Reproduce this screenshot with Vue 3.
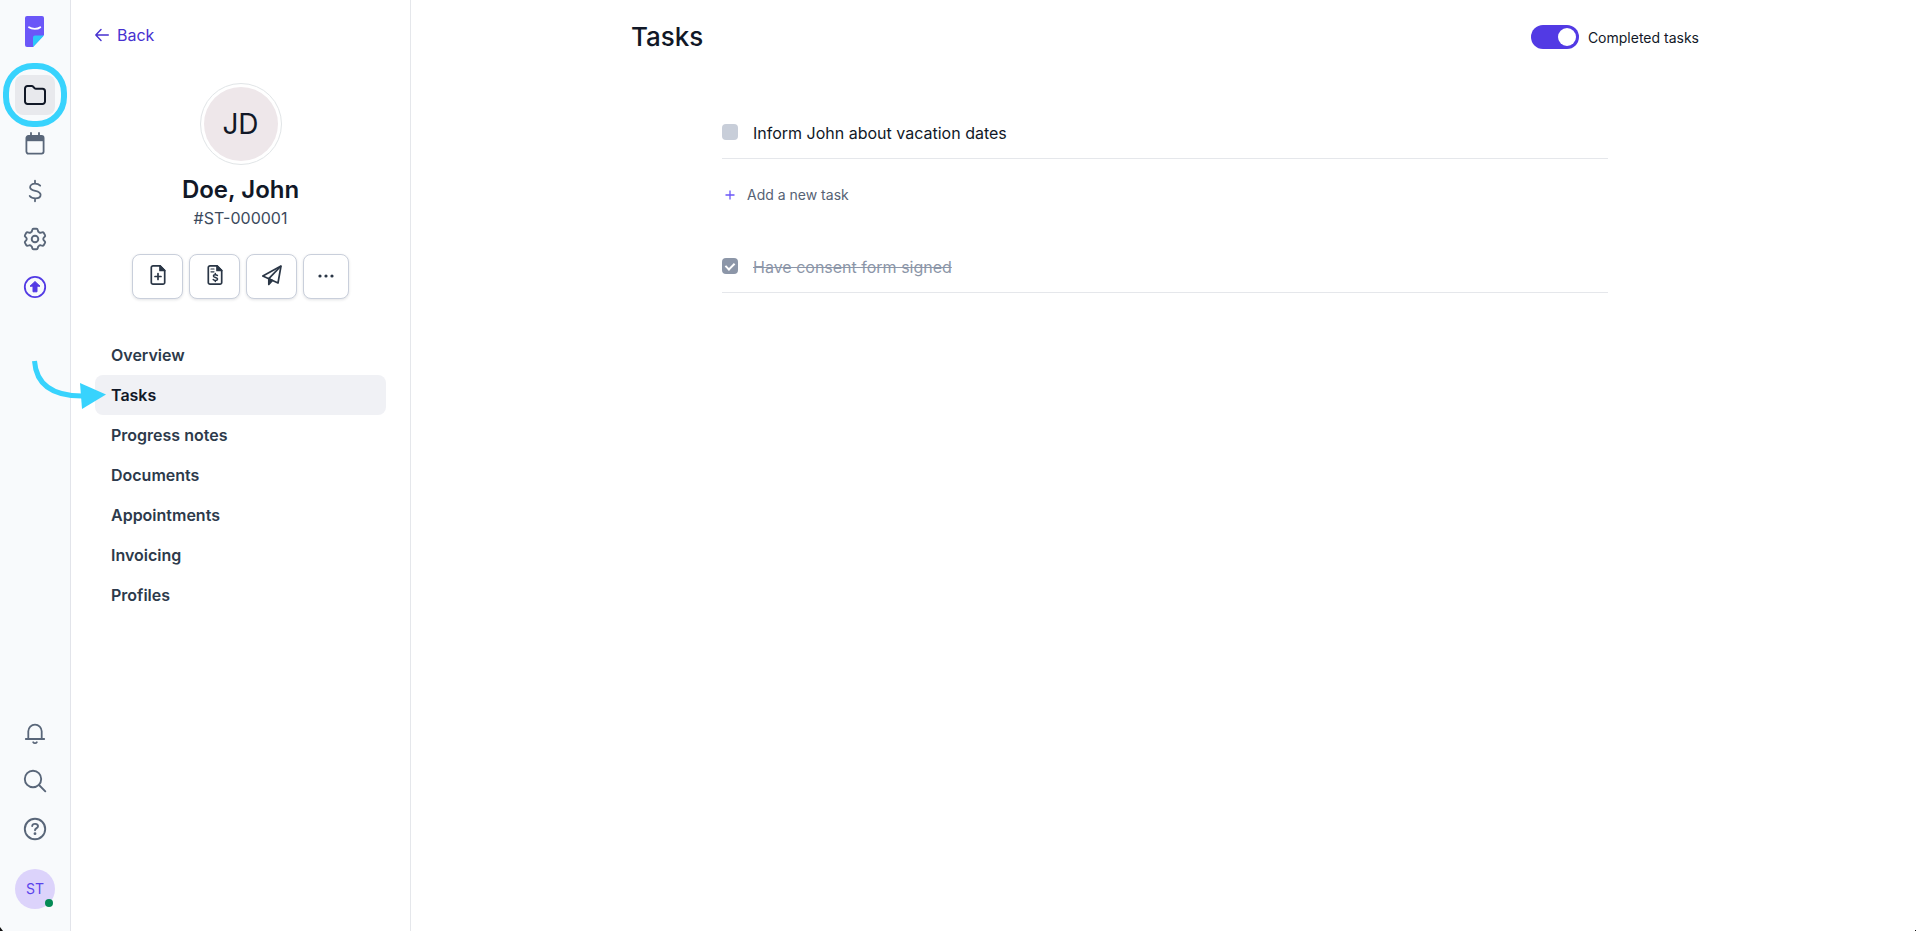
<script setup>
import { ref } from 'vue'

const showCompleted = ref(true)
const nav = ['Overview', 'Tasks', 'Progress notes', 'Documents', 'Appointments', 'Invoicing', 'Profiles']
const active = ref('Tasks')
const todo = ref(false)
const signed = ref(true)
</script>

<template>
  <div class="app">
    <nav class="rail" aria-label="Main">
      <a href="#" class="logo" aria-label="Home">
        <svg width="19" height="31" viewBox="0 0 19 31">
          <path d="M2 0H17a2 2 0 0 1 2 2V19L8 31H2a2 2 0 0 1-2-2V2a2 2 0 0 1 2-2z" fill="#6b57f8" />
          <path d="M19 19.5H10a2 2 0 0 0-2 2V31z" fill="#2bc8fa" />
          <path d="M4 11.2c3 2.200 8.500 2.200 11.300 0" fill="none" stroke="#fff" stroke-width="1.800" stroke-linecap="round" />
        </svg>
      </a>
      <a href="#" class="item current" aria-label="Clients">
        <svg width="24" height="24" viewBox="0 0 24 24" fill="none" stroke="currentColor" stroke-width="2" stroke-linejoin="round">
          <path d="M2 5.500A2.500 2.500 0 0 1 4.500 3H8.700a2 2 0 0 1 1.500.7l1.300 1.400a2 2 0 0 0 1.500.7h6.500A2.500 2.500 0 0 1 22 8.300v10.200a2.500 2.500 0 0 1-2.500 2.500h-15A2.500 2.500 0 0 1 2 18.500z" />
        </svg>
        <span class="ring"></span>
      </a>
      <a href="#" class="item" aria-label="Calendar">
        <svg width="24" height="24" viewBox="0 -1 24 24" fill="none" stroke="currentColor" stroke-width="1.800">
          <rect x="3.400" y="4" width="17.200" height="17.600" rx="2" />
          <path d="M3 5h18v4.200H3z" fill="currentColor" stroke="none" />
          <path d="M8 1v4M16 1v4" stroke-linecap="round" />
        </svg>
      </a>
      <a href="#" class="item" aria-label="Billing">
        <svg width="24" height="24" viewBox="0 0 24 24" fill="none" stroke="currentColor" stroke-width="1.800" stroke-linecap="round">
          <path d="M12 1.700v3M12 19.300v3M17.200 6.700C15.800 5.200 14 4.700 12 4.700c-2.800 0-4.900 1.300-4.900 3.500 0 4.900 10.500 2.500 10.500 7.600 0 2.300-2.300 3.600-5.200 3.600-2.300 0-4.400-.7-5.700-2.400" />
        </svg>
      </a>
      <a href="#" class="item" aria-label="Settings">
        <svg width="24" height="24" viewBox="0 0 24 24" fill="none" stroke="currentColor" stroke-width="1.900" stroke-linejoin="round">
          <path d="M10.500 1.700h3q1 0 1.200 1l.4 1.500q.2.700.9 1l.6.400q.7.400 1.400.1l1.200-.4q1-.3 1.500.5l1.300 2.300q.5.900-.2 1.600l-1 1q-.5.500-.5 1.300t.5 1.300l1 1q.7.700.2 1.600l-1.300 2.300q-.5.800-1.500.5l-1.200-.4q-.7-.3-1.400.1l-.6.400q-.7.300-.9 1l-.4 1.500q-.2 1-1.200 1h-3q-1 0-1.200-1l-.4-1.500q-.2-.7-.9-1l-.6-.4q-.7-.4-1.400-.1l-1.200.4q-1 .3-1.500-.5L2 15.900q-.5-.9.2-1.600l1-1q.5-.5.5-1.300t-.5-1.300l-1-1Q1.500 9 2 8.100l1.300-2.300q.5-.8 1.500-.5L6 5.700q.7.300 1.400-.1L8 5.200q.7-.3.9-1l.4-1.500q.2-1 1.200-1z" />
          <circle cx="12" cy="12" r="3.300" />
        </svg>
      </a>
      <a href="#" class="item upgrade" aria-label="Upgrade">
        <svg width="24" height="24" viewBox="0 0 24 24">
          <circle cx="12" cy="12" r="10.200" fill="none" stroke="currentColor" stroke-width="1.800" />
          <path d="M12 6.500l5 4.700H14v5.600h-4v-5.600H7z" fill="currentColor" stroke="currentColor" stroke-width="1" stroke-linejoin="round" />
        </svg>
      </a>

      <span class="spacer"></span>

      <a href="#" class="item" aria-label="Notifications">
        <svg width="24" height="24" viewBox="0 -1 24 24" fill="none" stroke="currentColor" stroke-width="1.800" stroke-linecap="round" stroke-linejoin="round">
          <path d="M2.800 17h18.400M5.300 17V9.300a6.700 6.700 0 0 1 13.400 0V17" />
          <path d="M10.200 20.300c.8 1.200 2.800 1.200 3.600 0" />
        </svg>
      </a>
      <a href="#" class="item" aria-label="Search">
        <svg width="24" height="24" viewBox="0 0 24 24" fill="none" stroke="currentColor" stroke-width="1.900" stroke-linecap="round">
          <circle cx="10" cy="10" r="8.200" />
          <path d="M16 16l6.300 6.300" />
        </svg>
      </a>
      <a href="#" class="item" aria-label="Help">
        <svg width="24" height="24" viewBox="0 0 24 24" fill="none" stroke="currentColor" stroke-width="1.900" stroke-linecap="round">
          <circle cx="12" cy="12" r="10.200" />
          <path d="M9.200 9c.3-3 5.900-2.800 5.800.3 0 1.900-2.800 1.800-3 3.900" />
          <circle cx="12" cy="16.700" r="1.400" fill="currentColor" stroke="none" />
        </svg>
      </a>
      <button class="me" type="button">ST<span class="online"></span></button>
    </nav>

    <aside class="side">
      <a href="#" class="back">
        <svg width="14" height="14" viewBox="0 0 14 14" fill="none" stroke="currentColor" stroke-width="1.400" stroke-linecap="round" stroke-linejoin="round">
          <path d="M13.300 7H.8M6 1.500L.8 7 6 12.500" />
        </svg>
        Back
      </a>

      <div class="profile">
        <div class="portrait"><span>JD</span></div>
        <h2>Doe, John</h2>
        <p>#ST-000001</p>
        <div class="actions">
          <button type="button" aria-label="New note">
            <svg width="20" height="22" viewBox="0 0 20 22" fill="none" stroke="currentColor" stroke-width="1.700" stroke-linejoin="round" stroke-linecap="round">
              <path d="M12 1.800H5A1.700 1.700 0 0 0 3.300 3.500v15A1.700 1.700 0 0 0 5 20.200h10a1.700 1.700 0 0 0 1.700-1.700V6.500z" />
              <path d="M12 1.800v4.700h4.700z" fill="currentColor" />
              <path d="M10 9.500v6M7 12.500h6" />
            </svg>
          </button>
          <button type="button" aria-label="New invoice">
            <svg width="20" height="22" viewBox="0 0 20 22" fill="none" stroke="currentColor" stroke-width="1.700" stroke-linejoin="round" stroke-linecap="round">
              <path d="M12 1.800H5A1.700 1.700 0 0 0 3.300 3.500v15A1.700 1.700 0 0 0 5 20.200h10a1.700 1.700 0 0 0 1.700-1.700V6.500z" />
              <path d="M12 1.800v4.700h4.700z" fill="currentColor" />
              <path d="M6 5h3M6 7.800h3" stroke-width="1.200" />
              <path d="M10.300 9.500v1M10.300 16.500v1M12.400 11.500c-1-1.200-4-1.200-4 .5 0 1.900 4.200 1.100 4.200 3 0 1.800-3.300 1.900-4.400.6" stroke-width="1.500" />
            </svg>
          </button>
          <button type="button" aria-label="Send">
            <svg width="22" height="22" viewBox="0 0 22 22" fill="none" stroke="currentColor" stroke-width="1.700" stroke-linejoin="round">
              <path d="M20 2L1.800 12l6 2.700 9.200 4.300z" />
              <path d="M20 2L7.800 14.700" />
              <path d="M7.800 14.700V20.500l3.600-4z" fill="currentColor" />
            </svg>
          </button>
          <button type="button" class="more" aria-label="More">
            <svg width="18" height="4" viewBox="0 0 18 4" fill="currentColor">
              <circle cx="3" cy="2" r="1.600" /><circle cx="9" cy="2" r="1.600" /><circle cx="15" cy="2" r="1.600" />
            </svg>
          </button>
        </div>
      </div>

      <nav class="menu" aria-label="Client">
        <a v-for="n in nav" :key="n" href="#" :class="{ active: n === active }" @click.prevent="active = n">{{ n }}</a>
      </nav>
    </aside>

    <main class="main">
      <div class="content">
        <header class="head">
          <h1>Tasks</h1>
          <label class="toggle">
            <input v-model="showCompleted" type="checkbox" role="switch" />
            <span>Completed tasks</span>
          </label>
        </header>

        <section class="list">
          <label class="task">
            <input v-model="todo" type="checkbox" />
            <span>Inform John about vacation dates</span>
          </label>
          <button class="add" type="button">
            <svg width="10" height="10" viewBox="0 0 10 10" fill="none" stroke="currentColor" stroke-width="1.300">
              <path d="M5 .5v9M.5 5h9" />
            </svg>
            Add a new task
          </button>
          <label v-if="showCompleted" class="task done">
            <input v-model="signed" type="checkbox" />
            <span>Have consent form signed</span>
          </label>
        </section>
      </div>
    </main>

    <svg class="pointer" width="76" height="52" viewBox="0 0 76 52" aria-hidden="true">
      <path d="M4.500 1C6 22 19 36 52 36" fill="none" stroke="#38d3fd" stroke-width="5" />
      <path d="M50 23L76 34.500 52 49z" fill="#38d3fd" />
    </svg>
    <span class="corner left"></span>
    <span class="corner right"></span>
  </div>
</template>

<style>
body {
  background: #fff;
}
</style>

<style scoped>
.app {
  position: relative;
  display: flex;
  min-height: 100vh;
  overflow: hidden;
  font-family: Inter, "Liberation Sans", sans-serif;
  font-size: 16px;
  line-height: 24px;
  color: #111827;
}
.app * {
  box-sizing: border-box;
}
a {
  color: inherit;
  text-decoration: none;
}
button {
  font: inherit;
  color: inherit;
  cursor: pointer;
}
svg {
  display: block;
  flex: none;
}
h1, h2, p {
  margin: 0;
}

.rail {
  flex: none;
  display: flex;
  flex-direction: column;
  gap: 8px;
  width: 71px;
  padding: 16px 15px 22px;
  background: #f8fafc;
  border-right: 1px solid #e2e4ea;
  color: #596679;
}
.logo {
  margin: 0 0 20px 10px;
}
.item {
  position: relative;
  display: grid;
  place-items: center;
  width: 40px;
  height: 40px;
  padding-right: 1px;
  border-radius: 8px;
}
.current {
  background: #e8e9ed;
  color: #111827;
}
.upgrade {
  color: #523ae4;
}
.ring {
  position: absolute;
  inset: -12px;
  border: 6px solid #38d3fd;
  border-radius: 30px;
}
.spacer {
  flex: 1;
}
.me {
  position: relative;
  width: 40px;
  height: 40px;
  margin-top: 12px;
  padding: 0;
  border: 0;
  border-radius: 50%;
  background: #dcd3fb;
  color: #5b43ec;
  font-size: 14px;
}
.online {
  position: absolute;
  right: 2px;
  bottom: 2px;
  width: 8px;
  height: 8px;
  border-radius: 50%;
  background: #048a55;
}

.side {
  flex: none;
  width: 340px;
  padding: 23px 24px;
  border-right: 1px solid #e5e7eb;
}
.back {
  display: flex;
  align-items: center;
  gap: 8px;
  width: max-content;
  color: #4731d0;
}
.profile {
  display: flex;
  flex-direction: column;
  align-items: center;
  margin-top: 36px;
}
.portrait {
  width: 82px;
  height: 82px;
  padding: 3px;
  border: 1px solid #e1e5e7;
  border-radius: 50%;
}
.portrait span {
  display: grid;
  place-items: center;
  height: 100%;
  border-radius: 50%;
  background: #eee7ea;
  font-size: 28px;
}
.profile h2 {
  margin-top: 9px;
  font-size: 24px;
  line-height: 32px;
  font-weight: 600;
}
.profile p {
  color: #3c4a5d;
}
.actions {
  display: flex;
  gap: 6px;
  margin-top: 24px;
}
.actions button {
  display: grid;
  place-items: center;
  width: 51px;
  height: 45px;
  padding: 0 0 4px;
  border: 1px solid #c9cfdb;
  border-radius: 8px;
  background: #fff;
  color: #2a3646;
  box-shadow: 0 1px 3px rgba(15, 23, 42, 0.12);
}
.actions .more {
  width: 46px;
  padding-bottom: 2px;
}
.menu {
  display: flex;
  flex-direction: column;
  margin-top: 36px;
}
.menu a {
  padding: 8px 16px;
  border-radius: 8px;
  font-weight: 600;
  color: #2d3a4b;
}
.menu .active {
  background: #f0f1f5;
  color: #111827;
}

.main {
  flex: 1;
  padding-left: 3px;
}
.content {
  max-width: 1068px;
  margin: 0 auto;
  padding-top: 21px;
}
.head {
  display: flex;
  align-items: center;
  justify-content: space-between;
}
h1 {
  font-size: 26px;
  line-height: 32px;
  font-weight: 500;
}
.toggle {
  display: flex;
  align-items: center;
  gap: 9px;
  font-size: 14px;
}
.toggle span {
  padding-top: 2px;
}
.toggle input {
  appearance: none;
  display: flex;
  justify-content: flex-end;
  align-items: center;
  width: 48px;
  height: 24px;
  margin: 0;
  padding: 3px;
  border-radius: 12px;
  background: #523ae4;
}
.toggle input::after {
  content: "";
  width: 18px;
  height: 18px;
  border-radius: 50%;
  background: #fff;
}
.toggle input:not(:checked) {
  justify-content: flex-start;
  background: #c8ced9;
}
.list {
  margin: 67px 91px 0;
}
.task {
  display: flex;
  align-items: center;
  gap: 15px;
  height: 39px;
  padding-bottom: 12px;
  border-bottom: 1px solid #e5e7eb;
}
.task input {
  appearance: none;
  display: grid;
  place-items: center;
  width: 16px;
  height: 16px;
  margin: 0 0 2px;
  border-radius: 4px;
  background: #c8ced9;
}
.task input:checked {
  background: #8c96a8;
}
.task input:checked::after {
  content: "";
  width: 4px;
  height: 7px;
  margin-bottom: 2px;
  border: solid #fff;
  border-width: 0 2px 2px 0;
  transform: rotate(45deg);
}
.done {
  color: #8c96a8;
  text-decoration: line-through;
}
.add {
  display: flex;
  align-items: center;
  gap: 12px;
  margin: 24px 0 47px;
  padding: 0 3px;
  border: 0;
  background: none;
  font-size: 14px;
  color: #566274;
}
.add svg {
  color: #6b57f8;
}

.pointer {
  position: absolute;
  left: 30px;
  top: 360px;
}
.corner {
  position: absolute;
  bottom: 0;
  background: #111;
}
.left {
  left: 0;
  width: 3px;
  height: 4px;
  clip-path: polygon(0 0, 100% 100%, 0 100%);
}
.right {
  right: 0;
  width: 1px;
  height: 1px;
}
</style>
